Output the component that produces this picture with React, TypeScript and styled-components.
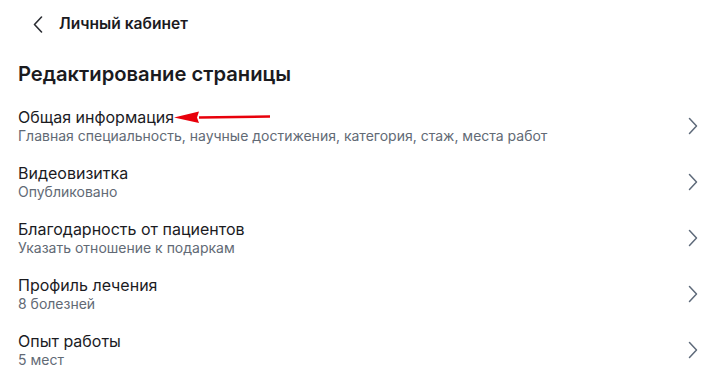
import React from "react";
import styled, { createGlobalStyle } from "styled-components";

const Global = createGlobalStyle`
  html, body { margin: 0; padding: 0; background: #ffffff; }
  body { font-family: Inter, "Noto Sans", sans-serif; -webkit-font-smoothing: antialiased; }
  * { box-sizing: border-box; }
`;

const Page = styled.div`
  width: 721px;
  min-height: 381px;
  background: #fff;
  color: #1b1b1f;
`;

const Header = styled.header`
  height: 48px;
  display: flex;
  align-items: center;
  gap: 14px;
  padding-left: 31px;
`;

const BackButton = styled.button`
  border: 0;
  background: none;
  padding: 0;
  width: 14px;
  height: 20px;
  display: flex;
  align-items: center;
  justify-content: center;
  color: #2b2d33;
  cursor: pointer;
`;

const HeaderTitle = styled.span`
  font-size: 15.6px;
  font-weight: 600;
  line-height: 20px;
  color: #1b1b1f;
`;

const Heading = styled.h1`
  margin: 14px 0 12px 18px;
  font-size: 20.2px;
  font-weight: 600;
  line-height: 24px;
  color: #1b1b1f;
`;

const List = styled.div`
  position: relative;
  display: flex;
  flex-direction: column;
`;

const Row = styled.div`
  height: 56px;
  display: flex;
  align-items: center;
  padding: 0 23px 0 18px;
  cursor: pointer;
`;

const RowText = styled.div`
  flex: 1;
  display: flex;
  flex-direction: column;
  padding-bottom: 1px;
`;

const RowTitle = styled.div`
  font-size: 16px;
  line-height: 20px;
  color: #1b1b1f;
`;

const RowSubtitle = styled.div`
  font-size: 14px;
  line-height: 17px;
  color: #626a75;
`;

const Pointer = styled.svg`
  position: absolute;
  left: 173px;
  top: 12px;
`;

const items = [
  { title: "Общая информация", sub: "Главная специальность, научные достижения, категория, стаж, места работ" },
  { title: "Видеовизитка", sub: "Опубликовано" },
  { title: "Благодарность от пациентов", sub: "Указать отношение к подаркам" },
  { title: "Профиль лечения", sub: "8 болезней" },
  { title: "Опыт работы", sub: "5 мест" },
];

const Chevron = () => (
  <svg width="10" height="18" viewBox="0 0 10 18" fill="none">
    <path d="M1.5 1.5L8.5 9L1.5 16.5" stroke="#5e6a7a" strokeWidth="1.5" strokeLinecap="round" strokeLinejoin="round" />
  </svg>
);

export default function App() {
  return (
    <Page>
      <Global />
      <Header>
        <BackButton aria-label="Назад">
          <svg width="10" height="17" viewBox="0 0 10 17" fill="none">
            <path d="M8.5 1L1.5 8.5L8.5 16" stroke="#2b2d33" strokeWidth="1.6" strokeLinecap="round" strokeLinejoin="round" />
          </svg>
        </BackButton>
        <HeaderTitle>Личный кабинет</HeaderTitle>
      </Header>
      <Heading>Редактирование страницы</Heading>
      <List>
        {items.map((it) => (
          <Row key={it.title}>
            <RowText>
              <RowTitle>{it.title}</RowTitle>
              <RowSubtitle>{it.sub}</RowSubtitle>
            </RowText>
            <Chevron />
          </Row>
        ))}
        <Pointer width="100" height="14" viewBox="0 0 100 14">
          <path d="M26 6.3L97 5.2L97 7.8L26 8.7Z" fill="#e8000b" />
          <path d="M1 7.5L26 1.5L24 7.5L26 13Z" fill="#e8000b" />
        </Pointer>
      </List>
    </Page>
  );
}
